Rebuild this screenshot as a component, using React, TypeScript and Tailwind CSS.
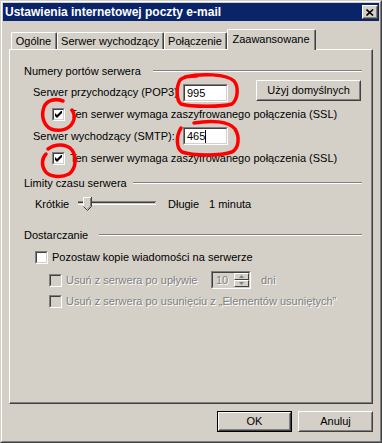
import React from 'react';

// klasyczne ramki Windows
const sunkenOuter = 'border border-t-[#808080] border-l-[#808080] border-b-white border-r-white';
const sunkenInner = 'border border-t-[#404040] border-l-[#404040] border-b-[#d4d0c8] border-r-[#d4d0c8]';
const raisedOuter = 'border border-t-white border-l-white border-b-[#404040] border-r-[#404040]';
const raisedInner = 'border border-t-[#d4d0c8] border-l-[#d4d0c8] border-b-[#808080] border-r-[#808080]';

const disabledText = 'text-[#808080] [text-shadow:1px_1px_0_#ffffff]';

function CheckBox({ checked, disabled }: { checked?: boolean; disabled?: boolean }) {
  return (
    <div className={`w-[13px] h-[13px] shrink-0 ${sunkenOuter}`}>
      <div className={`w-full h-full flex items-center justify-center ${sunkenInner} ${disabled ? 'bg-[#d4d0c8]' : 'bg-white'}`}>
        {checked && (
          <svg width="7" height="7" viewBox="0 0 7 7">
            <polygon points="0,2 2,4 7,-1 7,2 2,7 0,5" fill="#000" />
          </svg>
        )}
      </div>
    </div>
  );
}

function GroupHeader({ label, width }: { label: string; width: string }) {
  return (
    <div className="h-[14px] flex items-center">
      <span className={`${width} shrink-0 leading-[14px]`}>{label}</span>
      <div className="flex-1 h-[2px] border-t border-t-[#808080] border-b border-b-white" />
    </div>
  );
}

function TextInput({ value, caret }: { value: string; caret?: boolean }) {
  return (
    <div className={`w-[45px] h-[18px] shrink-0 ${sunkenOuter}`}>
      <div className={`w-full h-full bg-white flex items-center pl-[2px] ${sunkenInner}`}>
        <span className="leading-[13px]">{value}</span>
        {caret && <span className="w-px h-[13px] bg-black" />}
      </div>
    </div>
  );
}

function Button({ label, isDefault, width }: { label: string; isDefault?: boolean; width: string }) {
  return (
    <div className={`${width} h-[21px] ${isDefault ? 'border border-black' : ''}`}>
      <div className={`w-full h-full ${raisedOuter}`}>
        <div className={`w-full h-full flex items-center justify-center ${raisedInner}`}>
          <span className="leading-[13px]">{label}</span>
        </div>
      </div>
    </div>
  );
}

function Tab({ label, width, active }: { label: string; width: string; active?: boolean }) {
  if (active) {
    return (
      <div className={`relative z-10 ${width} h-[21px] mb-[-1px] bg-[#d4d0c8] rounded-t-[2px] border-t border-l border-r border-t-white border-l-white border-r-[#404040]`}>
        <div className="w-full h-full border-r border-r-[#808080] flex items-start justify-center pt-[3px]">
          <span className="leading-[13px]">{label}</span>
        </div>
      </div>
    );
  }
  return (
    <div className={`${width} h-[17px] rounded-t-[2px] border-t border-l border-r border-t-white border-l-white border-r-[#404040]`}>
      <div className="w-full h-full border-r border-r-[#808080] flex items-start justify-center pt-[2px]">
        <span className="leading-[13px]">{label}</span>
      </div>
    </div>
  );
}

function Slider() {
  return (
    <svg width="78" height="16" viewBox="0 0 78 16" className="shrink-0">
      <rect x="0" y="5" width="78" height="1" fill="#808080" />
      <rect x="0" y="6" width="77" height="1" fill="#404040" />
      <rect x="1" y="7" width="76" height="1" fill="#d4d0c8" />
      <rect x="0" y="8" width="78" height="1" fill="#ffffff" />
      <polygon points="5,1 13,1 13,10 9,14 5,10" fill="#d4d0c8" />
      <polyline points="5.5,10.5 5.5,1.5 13.5,1.5" fill="none" stroke="#ffffff" />
      <polyline points="13.5,1 13.5,10.5 9.5,14.5 5.5,10.5" fill="none" stroke="#404040" />
      <polyline points="12.5,2 12.5,10 9.5,13" fill="none" stroke="#808080" />
    </svg>
  );
}

function Spinner() {
  return (
    <div className={`w-[40px] h-[18px] shrink-0 ${sunkenOuter}`}>
      <div className={`w-full h-full bg-[#d4d0c8] flex ${sunkenInner}`}>
        <span className={`flex-1 pl-[3px] leading-[14px] ${disabledText}`}>10</span>
        <div className="w-[15px] flex flex-col">
          <div className={`h-[7px] flex items-center justify-center ${raisedOuter}`}>
            <svg width="5" height="3" viewBox="0 0 5 3">
              <polygon points="2.5,0 5,3 0,3" fill="#808080" />
            </svg>
          </div>
          <div className={`h-[7px] flex items-center justify-center ${raisedOuter}`}>
            <svg width="5" height="3" viewBox="0 0 5 3">
              <polygon points="0,0 5,0 2.5,3" fill="#808080" />
            </svg>
          </div>
        </div>
      </div>
    </div>
  );
}

function RedMarks() {
  return (
    <svg className="absolute inset-0 pointer-events-none" width="382" height="443" viewBox="0 0 382 443">
      <g fill="none" stroke="#ff0000" strokeWidth="3.5" strokeLinecap="round" strokeLinejoin="round">
        <path d="M184 76 C200 72, 226 73, 233 80 C238 86, 237 98, 231 103 C222 106, 190 106, 180 103 C175 99, 175 86, 179 79 C182 76, 190 75, 196 75" />
        <path d="M193 122 C210 119, 228 120, 234 128 C239 136, 238 147, 231 151 C220 155, 192 155, 181 151 C175 147, 175 135, 180 127" />
        <path d="M62 100 C54 97, 46 99, 43 106 C40 114, 42 124, 50 128 C58 131, 68 129, 72 121 C74 117, 73 112, 71 109" />
        <path d="M47 148 C55 142, 66 143, 71 149 C76 156, 75 168, 68 173 C60 177, 48 176, 44 170 C40 164, 41 157, 45 153" />
      </g>
    </svg>
  );
}

export default function App() {
  return (
    <div className="relative w-[382px] h-[443px] bg-[#d4d0c8] text-[11px] text-black font-['Liberation_Sans',Arial,sans-serif] border border-t-[#d4d0c8] border-l-[#d4d0c8] border-r-[#404040] border-b-[#404040]">
      <div className="h-full flex flex-col p-px border border-t-white border-l-white border-r-[#808080] border-b-[#808080]">
        {/* pasek tytułu */}
        <div className="h-[18px] shrink-0 bg-[#0a246a] flex items-center justify-between pl-[2px] pr-px">
          <span className="text-white font-bold text-[12px] leading-[14px]">Ustawienia internetowej poczty e-mail</span>
          <div className={`w-[16px] h-[14px] bg-[#d4d0c8] ${raisedOuter}`}>
            <div className={`w-full h-full flex items-center justify-center ${raisedInner}`}>
              <svg width="8" height="7" viewBox="0 0 8 7">
                <path d="M0.5 0.5 L7 6.5 M7 0.5 L0.5 6.5" stroke="#000" strokeWidth="1.6" />
              </svg>
            </div>
          </div>
        </div>

        {/* zakładki */}
        <div className="mt-[8px] px-[6px]">
          <div className="h-[20px] flex items-end pl-[2px]">
            <Tab label="Ogólne" width="w-[46px]" />
            <Tab label="Serwer wychodzący" width="w-[107px]" />
            <Tab label="Połączenie" width="w-[63px]" />
            <Tab label="Zaawansowane" width="w-[89px]" active />
          </div>
        </div>

        {/* panel */}
        <div className="mx-[6px] h-[355px] shrink-0 border-t border-l border-r border-b border-t-white border-l-white border-r-[#404040] border-b-[#404040]">
          <div className="w-full h-full border-r border-b border-r-[#808080] border-b-[#808080] pl-[14px] pr-[9px] pt-[14px] flex flex-col">
            <GroupHeader label="Numery portów serwera" width="w-[129px]" />

            <div className="mt-[2px] flex items-start h-[22px]">
              <span className="w-[150px] ml-[9px] mt-[5px] leading-[14px] shrink-0">Serwer przychodzący (POP3)</span>
              <div className="mt-[4px]">
                <TextInput value="995" />
              </div>
              <div className="ml-[28px]">
                <Button label="Użyj domyślnych" width="w-[105px]" />
              </div>
            </div>

            <div className="mt-[5px] h-[14px] flex items-center pl-[28px] gap-[5px]">
              <CheckBox checked />
              <span className="leading-[14px]">Ten serwer wymaga zaszyfrowanego połączenia (SSL)</span>
            </div>

            <div className="mt-[6px] h-[18px] flex items-center">
              <span className="w-[150px] ml-[9px] leading-[14px] shrink-0">Serwer wychodzący (SMTP):</span>
              <TextInput value="465" caret />
            </div>

            <div className="mt-[6px] h-[14px] flex items-center pl-[28px] gap-[5px]">
              <CheckBox checked />
              <span className="leading-[14px]">Ten serwer wymaga zaszyfrowanego połączenia (SSL)</span>
            </div>

            <div className="mt-[11px]">
              <GroupHeader label="Limity czasu serwera" width="w-[109px]" />
            </div>

            <div className="mt-[6px] h-[16px] flex items-center pl-[11px]">
              <span className="w-[43px] shrink-0 leading-[14px]">Krótkie</span>
              <Slider />
              <span className="ml-[12px] w-[41px] shrink-0 leading-[14px]">Długie</span>
              <span className="leading-[14px]">1 minuta</span>
            </div>

            <div className="mt-[16px]">
              <GroupHeader label="Dostarczanie" width="w-[75px]" />
            </div>

            <div className="mt-[8px] h-[14px] flex items-center pl-[11px] gap-[4px]">
              <CheckBox />
              <span className="leading-[14px]">Pozostaw kopie wiadomości na serwerze</span>
            </div>

            <div className="mt-[7px] h-[18px] flex items-center pl-[25px]">
              <CheckBox disabled />
              <span className={`ml-[4px] w-[145px] shrink-0 leading-[14px] ${disabledText}`}>Usuń z serwera po upływie</span>
              <Spinner />
              <span className={`ml-[10px] leading-[14px] ${disabledText}`}>dni</span>
            </div>

            <div className="mt-[5px] h-[14px] flex items-center pl-[25px] gap-[4px]">
              <CheckBox disabled />
              <span className={`leading-[14px] ${disabledText}`}>Usuń z serwera po usunięciu z „Elementów usuniętych”</span>
            </div>
          </div>
        </div>

        {/* przyciski */}
        <div className="mt-[7px] px-[6px] flex justify-end gap-[6px]">
          <Button label="OK" isDefault width="w-[75px]" />
          <Button label="Anuluj" width="w-[75px]" />
        </div>
      </div>
      <RedMarks />
    </div>
  );
}
